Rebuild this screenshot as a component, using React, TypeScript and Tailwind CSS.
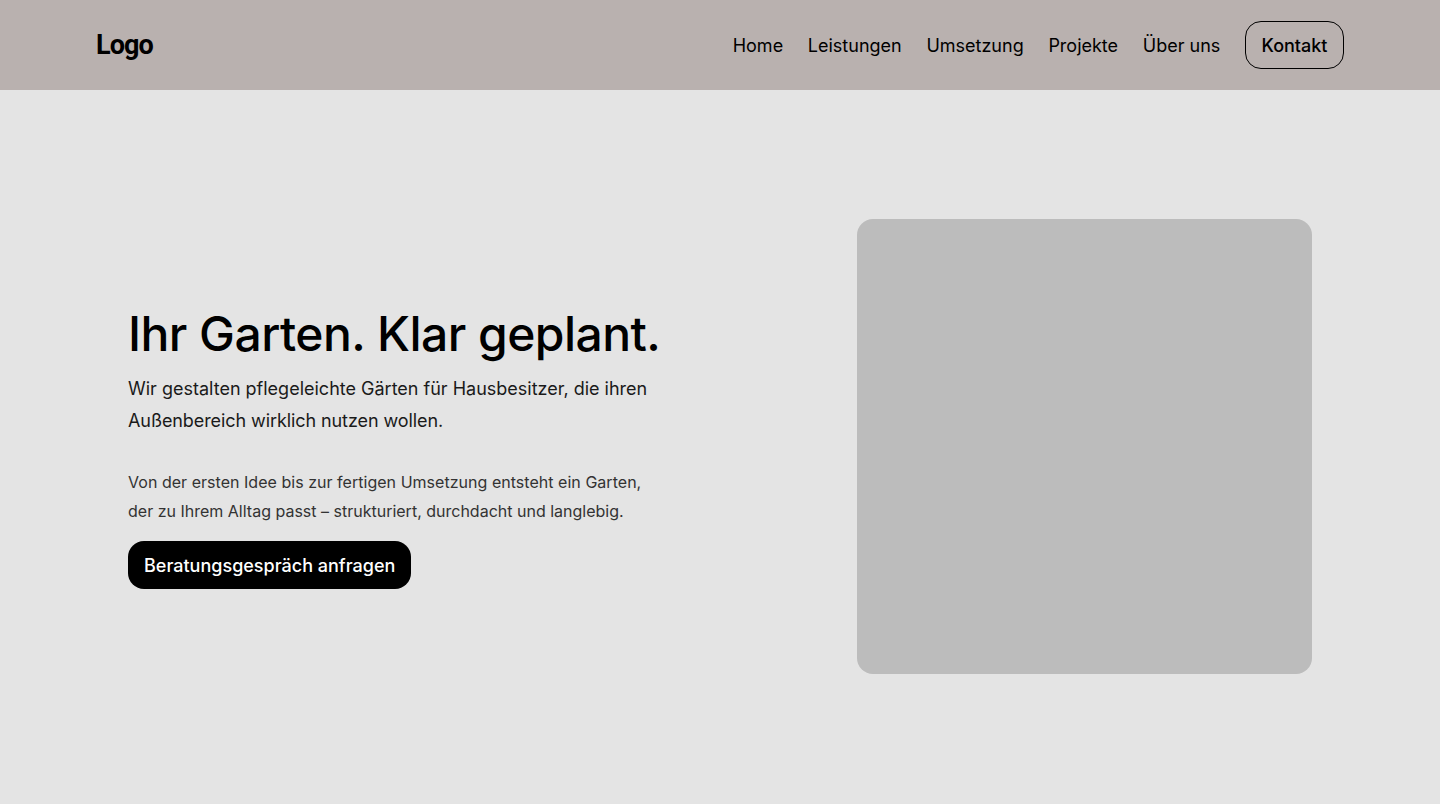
const links = ["Home", "Leistungen", "Umsetzung", "Projekte", "Über uns"];

export default function App() {
  return (
    <div className="min-h-screen bg-[#e4e4e4] font-['Inter',sans-serif] text-black antialiased">
      <header className="h-[90px] bg-[#b9b1af] pl-24 pr-24 flex items-center justify-between">
        <div className="font-['Roboto',sans-serif] text-[27px] font-bold leading-none tracking-[-0.9px] pt-px">Logo</div>
        <nav className="flex items-center gap-[24.7px]">
          {links.map((link) => (
            <a key={link} className="text-lg leading-7 pt-px">
              {link}
            </a>
          ))}
          <a className="border border-black rounded-[16px] px-[15.5px] pt-px h-12 flex items-center text-lg font-medium">
            Kontakt
          </a>
        </nav>
      </header>

      <main className="flex items-center justify-between pl-32 pr-32 pt-[129px]">
        <div className="w-[540px]">
          <h1 className="text-[48px] leading-[60px] font-medium tracking-[-0.55px] whitespace-nowrap">Ihr Garten. Klar geplant.</h1>
          <p className="mt-[9px] text-lg leading-8 text-[#1a1a1a]">
            Wir gestalten pflegeleichte Gärten für Hausbesitzer, die ihren
            <span className="block tracking-[-0.085px]">Außenbereich wirklich nutzen wollen.</span>
          </p>
          <p className="mt-[31px] text-base leading-[29px] text-[#333333]">
            <span className="block tracking-[0.03px]">Von der ersten Idee bis zur fertigen Umsetzung entsteht ein Garten,</span>
            der zu Ihrem Alltag passt – strukturiert, durchdacht und langlebig.
          </p>
          <a className="mt-[15px] inline-flex h-12 items-center rounded-2xl bg-black px-4 pt-[2px] text-lg font-medium text-white">
            Beratungsgespräch anfragen
          </a>
        </div>
        <div className="h-[455px] w-[455px] rounded-2xl bg-[#bcbcbc]" />
      </main>
    </div>
  );
}
